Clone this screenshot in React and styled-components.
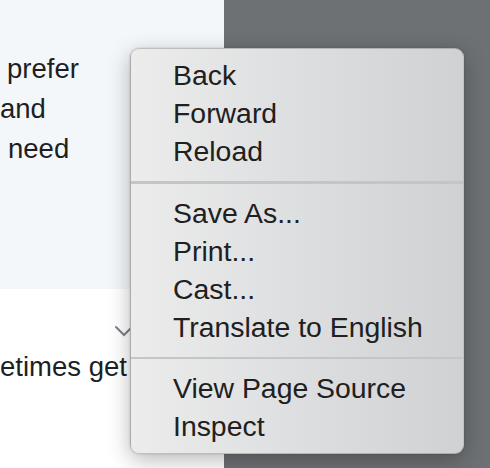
import React from "react";
import styled, { createGlobalStyle } from "styled-components";

const Global = createGlobalStyle`
  html, body { margin: 0; padding: 0; }
  body { width: 490px; height: 468px; overflow: hidden; background: #ffffff; }
`;

const Page = styled.div`
  position: relative;
  display: grid;
  grid-template-columns: 224px 1fr;
  width: 490px;
  height: 468px;
  font-family: "Liberation Sans", Arial, sans-serif;
`;

const LeftColumn = styled.div`
  display: grid;
  grid-template-rows: 289px 1fr;
  background: #ffffff;
`;

const TopPanel = styled.div`
  background: #f4f7fa;
  padding-top: 49px;
`;

const BottomPanel = styled.div`
  position: relative;
  padding-top: 58px;
`;

const Line = styled.div`
  font-size: 27.5px;
  line-height: 40px;
  color: #1d1f22;
  white-space: pre;
  padding-left: ${(p) => p.$indent || 0}px;
`;

const Chevron = styled.svg`
  position: absolute;
  left: 114px;
  top: 36px;
`;

const GrayColumn = styled.div`
  background: #6e7174;
`;

const Menu = styled.div`
  position: absolute;
  left: 130px;
  top: 48px;
  width: 334px;
  height: 406px;
  box-sizing: border-box;
  border-radius: 9px;
  background: linear-gradient(to right, #ececec 0%, #e0e1e2 40%, #d0d1d3 100%);
  border: 1px solid rgba(0, 0, 0, 0.18);
  box-shadow: 0 6px 22px rgba(0, 0, 0, 0.28), 0 0 2px rgba(0, 0, 0, 0.2);
  padding: 7px 0 8px;
  display: flex;
  flex-direction: column;
`;

const Group = styled.div`
  display: flex;
  flex-direction: column;
`;

const Item = styled.div`
  padding-left: 42px;
  font-size: 28.4px;
  line-height: 38px;
  color: #202020;
  white-space: nowrap;
`;

const Separator = styled.div`
  height: 3px;
  background: #c4c5c7;
  margin: 11px 0 10px;
`;

const groups = [
  ["Back", "Forward", "Reload"],
  ["Save As...", "Print...", "Cast...", "Translate to English"],
  ["View Page Source", "Inspect"],
];

export default function App() {
  return (
    <>
      <Global />
      <Page>
        <LeftColumn>
          <TopPanel>
            <Line $indent={7}>prefer</Line>
            <Line>and</Line>
            <Line $indent={8}>need</Line>
          </TopPanel>
          <BottomPanel>
            <Chevron width="20" height="14" viewBox="0 0 20 14">
              <path d="M2 2 L10 10 L18 2" fill="none" stroke="#7b8188" strokeWidth="2" strokeLinecap="round" />
            </Chevron>
            <Line>etimes get</Line>
          </BottomPanel>
        </LeftColumn>
        <GrayColumn />
        <Menu>
          {groups.map((g, i) => (
            <React.Fragment key={i}>
              {i > 0 && <Separator />}
              <Group>
                {g.map((t) => (
                  <Item key={t}>{t}</Item>
                ))}
              </Group>
            </React.Fragment>
          ))}
        </Menu>
      </Page>
    </>
  );
}
